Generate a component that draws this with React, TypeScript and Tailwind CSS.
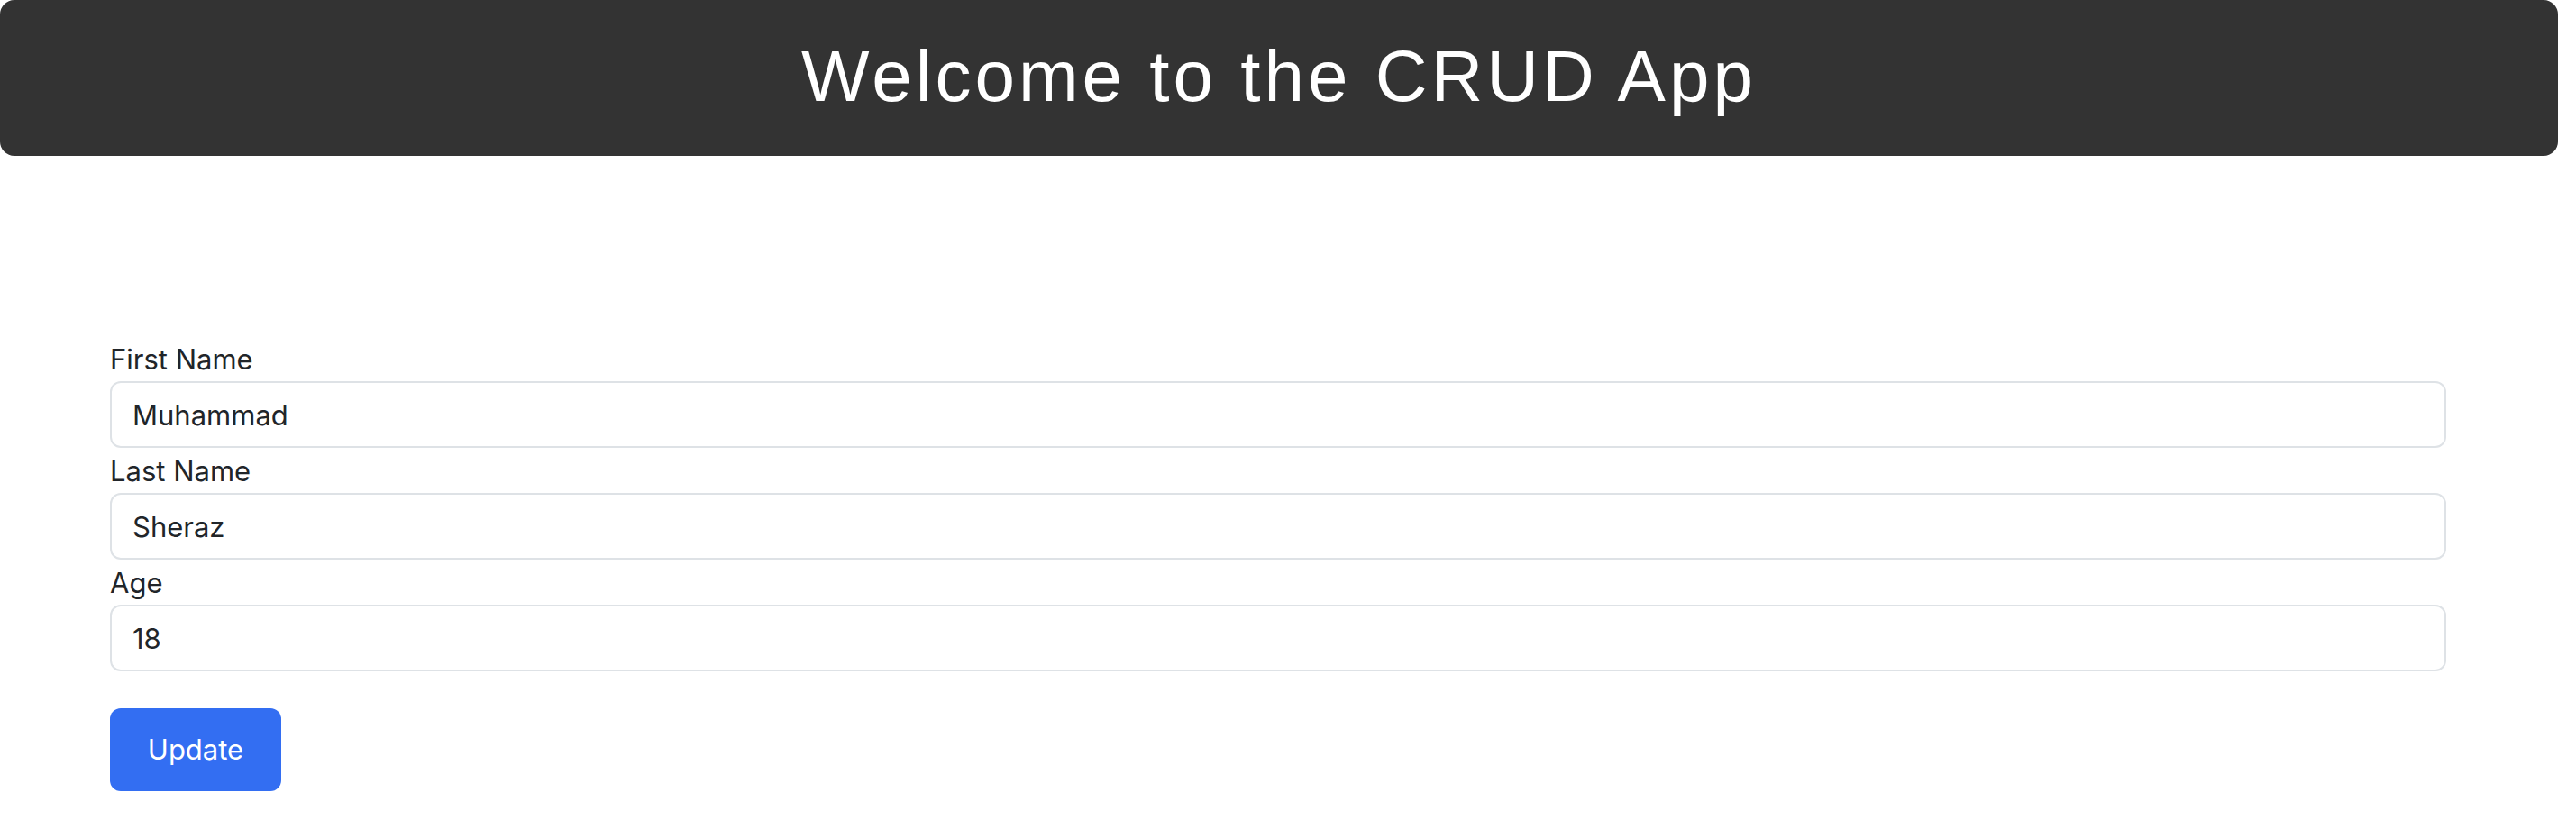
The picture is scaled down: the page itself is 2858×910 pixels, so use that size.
import React from "react";

export default function App() {
  return (
    <div className="w-[2858px] h-[910px] bg-white font-['Inter',sans-serif]">
      <header className="w-[2838px] h-[173px] bg-[#333333] rounded-[16px] text-center">
        <h1 className="pt-[39px] text-[80px] leading-[92px] tracking-[4px] text-white font-['Liberation_Sans',Arial,sans-serif] font-normal">
          Welcome to the CRUD App
        </h1>
      </header>
      <form className="ml-[122px] w-[2592px] pt-[206px] flex flex-col" onSubmit={(e) => e.preventDefault()}>
        <label className="block text-[31px] leading-[40px] mb-[4px] text-[#212529]">First Name</label>
        <input
          defaultValue="Muhammad"
          className="block w-full h-[74px] border-2 border-[#dee2e6] rounded-[12px] px-[23px] text-[31px] text-[#212529] mb-[6px] outline-none"
        />
        <label className="block text-[31px] leading-[40px] mb-[4px] text-[#212529]">Last Name</label>
        <input
          defaultValue="Sheraz"
          className="block w-full h-[74px] border-2 border-[#dee2e6] rounded-[12px] px-[23px] text-[31px] text-[#212529] mb-[6px] outline-none"
        />
        <label className="block text-[31px] leading-[40px] mb-[4px] text-[#212529]">Age</label>
        <input
          defaultValue="18"
          className="block w-full h-[74px] border-2 border-[#dee2e6] rounded-[12px] px-[23px] text-[31px] text-[#212529] outline-none"
        />
        <div className="mt-[41px]">
          <button
            type="submit"
            className="w-[190px] h-[92px] rounded-[12px] bg-[#336ef2] text-white text-[31px]"
          >
            Update
          </button>
        </div>
      </form>
    </div>
  );
}
